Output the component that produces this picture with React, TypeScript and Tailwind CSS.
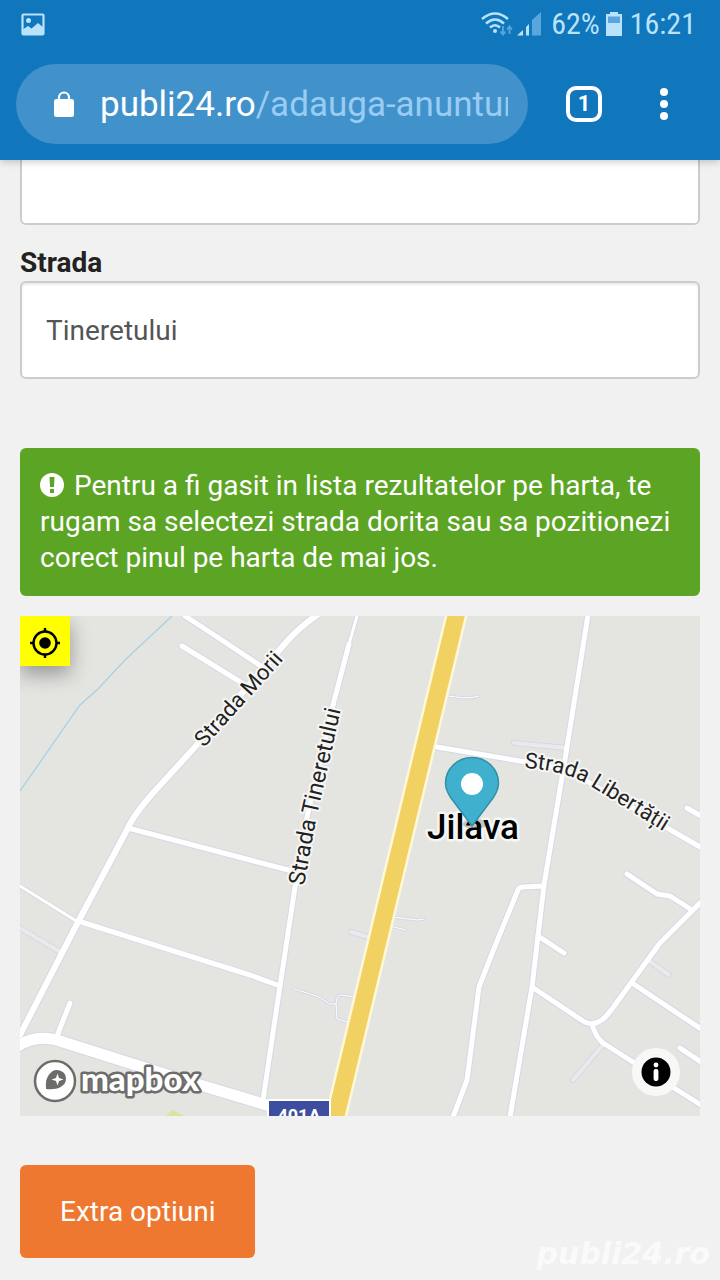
import { useState } from 'react';

type Line = { d: string; w: number; soft?: boolean };

// Street geometry, in map units (680 x 500)
const streets: Line[] = [
  { d: 'M494 127L547 132', w: 4, soft: true },
  { d: 'M0 312L40 336', w: 4, soft: true },
  { d: 'M628 344L649 359', w: 4, soft: true },
  { d: 'M583 429L553 464', w: 4, soft: true },
  { d: 'M331 316L348 321', w: 4, soft: true },
  { d: 'M420 79L436 81Q450 83 459 80', w: 1 },
  { d: 'M373 301L397 304L404 303', w: 1 },
  { d: 'M370 310L386 314', w: 1 },
  { d: 'M274 373L297 380L310 388H316L317 382Q318 379 321 379L334 381M316 388L317 403L328 406', w: 1 },
  { d: 'M0 270L58 306', w: 3 },
  { d: 'M337 0L328 32', w: 3 },
  { d: 'M165 0L182 11L244 52', w: 5 },
  { d: 'M162 30L222 67', w: 5 },
  { d: 'M297 -1Q278 12 262 31L175 131L133 177Q113 200 108 212L58 306L0 419', w: 6 },
  { d: 'M108 212L230 244L276 256', w: 5 },
  { d: 'M58 305L230 359L260 370', w: 5 },
  { d: 'M329 28L313 89L285 210L275 271L260 370L243 484', w: 5 },
  { d: 'M417 131L500 145Q545 150 575 170L680 231', w: 5 },
  { d: 'M667 192L681 200', w: 5 },
  { d: 'M568 -1L547 131L524 269L512 371L490 501', w: 5 },
  { d: 'M524 270L503 271Q499 271 498 274L475 330L459 371L450 441L447 464L433 501', w: 5 },
  { d: 'M518 320L544 337', w: 5 },
  { d: 'M512 371L563 405Q572 411 582 404Q587 400 592 393L640 327L681 286', w: 5 },
  { d: 'M572 408Q575 420 583 427L681 489', w: 5 },
  { d: 'M607 258L637 278L650 280L672 294', w: 5 },
  { d: 'M612 367L681 413', w: 5 },
  { d: 'M660 432L681 446', w: 5 },
  { d: 'M50 387L37 420', w: 5 },
  { d: 'M-2 430Q18 417 43 426L160 463L250 490', w: 11 },
];

const halo = {
  stroke: '#f6f6f4',
  strokeLinejoin: 'round' as const,
  paintOrder: 'stroke',
};

function StreetMap() {
  return (
    <svg
      viewBox="0 0 680 500"
      preserveAspectRatio="xMidYMid slice"
      className="block h-[500px] w-full font-[Roboto,sans-serif]"
      role="img"
      aria-label="Harta Jilava"
    >
      <defs>
        <path id="morii" d="M184 132L267 40" />
        <path id="tineretului" d="M284 270L296 204L324 80" />
        <path id="libertatii" d="M504 152Q542 154 567 168L608 193L662 227" />
      </defs>
      <rect width="680" height="500" fill="#e4e4e1" />
      <path d="M146 500L152 494L165 500Z" fill="#dce2a4" />
      <path d="M152 0L105 44L78 73L60 89L0 175" fill="none" stroke="#a9d0e5" strokeWidth="1.3" />

      <g fill="none" strokeLinecap="round" strokeLinejoin="round">
        {streets.map((s) => (
          <path key={s.d} d={s.d} stroke="#d6d8e4" strokeWidth={s.w + 2} />
        ))}
        {streets.map((s) => (
          <path key={s.d} d={s.d} stroke={s.soft ? '#eaeaec' : '#fff'} strokeWidth={s.w} />
        ))}
      </g>

      <g fill="none">
        <path d="M437 -4L375 254L315 504" stroke="#fff8d8" strokeWidth="22" />
        <path d="M437 -4L375 254L315 504" stroke="#f0d162" strokeWidth="17" />
      </g>

      <g fill="#222" fontSize="22" strokeWidth="4" {...halo}>
        <text>
          <textPath href="#morii">Strada Morii</textPath>
        </text>
        <text fontSize="23">
          <textPath href="#tineretului">Strada Tineretului</textPath>
        </text>
        <text>
          <textPath href="#libertatii">Strada Libertății</textPath>
        </text>
      </g>
      <text x="453" y="223" textAnchor="middle" fontSize="35" fontWeight="500" fill="#000" strokeWidth="5" {...halo}>
        Jilava
      </text>

      <rect x="248" y="484" width="62" height="30" fill="#3d4ea1" stroke="#fff" strokeWidth="2" />
      <text x="279" y="506" textAnchor="middle" fontSize="18" fontWeight="700" fill="#fff">
        401A
      </text>

      <ellipse cx="455" cy="208" rx="12" ry="5" fill="#000" opacity="0.2" />
      <path
        d="M452 210L431 182Q425.500 174 425.500 167A26.500 25.500 0 0 1 478.500 167Q478.500 174 473 182Z"
        fill="#3fb1ce"
        stroke="#338fa7"
        strokeWidth="1.500"
      />
      <circle cx="452" cy="168" r="11" fill="#fff" />
    </svg>
  );
}

function MapboxLogo() {
  return (
    <svg viewBox="0 0 176 46" className="block h-[46px] w-[176px]" aria-hidden="true">
      <circle cx="22" cy="23" r="20" fill="#fff" stroke="#6c6c6a" strokeWidth="2.500" />
      <path d="M13 31Q12 20 17 15.500A8.800 8.800 0 1 1 29 28Q24 32 13 31Z" fill="#6c6c6a" />
      <path d="M24.500 15.500L26 20L30.500 21.500L26 23L24.500 27.500L23 23L18.500 21.500L23 20Z" fill="#fff" />
      <text
        x="48"
        y="33"
        fontSize="33"
        fontWeight="900"
        fill="#fff"
        stroke="#6c6c6a"
        strokeWidth="5"
        strokeLinejoin="round"
        paintOrder="stroke"
        className="font-[Lato,sans-serif]"
      >
        mapbox
      </text>
    </svg>
  );
}

function StatusBar() {
  return (
    <div className="flex h-12 items-center px-5 text-[#b9e2fb]">
      <svg viewBox="0 0 26 24" className="h-6 w-[26px]" aria-hidden="true">
        <rect x="2.500" y="2.500" width="21" height="20" rx="1" fill="none" stroke="currentColor" strokeWidth="2.200" />
        <circle cx="8.500" cy="8.500" r="2.500" fill="currentColor" />
        <path d="M2 18L8 14L11.500 16.500L18 11L24 16V23H2Z" fill="currentColor" />
      </svg>
      <div className="ml-auto flex items-center pr-1">
        <svg viewBox="0 0 62 26" className="mr-2 h-[26px] w-[62px]" aria-hidden="true">
          <g fill="none" stroke="currentColor" strokeWidth="2.500">
            <path d="M1 8Q14 -3 27 8" />
            <path d="M5 12.500Q14 4.500 23 12.500" />
            <path d="M9 16.500Q14 12 19 16.500" />
          </g>
          <circle cx="14" cy="20" r="2" fill="currentColor" />
          <g fill="none" stroke="#5aa6dc" strokeWidth="1.800">
            <path d="M22 15V23M19.500 20.500L22 23.500L24.500 20.500" />
            <path d="M28.500 23V16M26 18.500L28.500 15.500L31 18.500" />
          </g>
          <path d="M36 24.500L42 19V24.500Z" fill="currentColor" />
          <path d="M45 24.500V16L48 13V24.500Z" fill="currentColor" />
          <path d="M51 24.500V9L60 1V24.500Z" fill="#5aa6dc" />
        </svg>
        <span className="text-[30px] leading-9 font-[Roboto_Condensed,Roboto,sans-serif]">62%</span>
        <svg viewBox="0 0 16 24" className="mr-2 ml-1.5 h-6 w-4" aria-hidden="true">
          <path d="M4 0H12V2H16V24H0V2H4Z" fill="currentColor" />
          <path d="M2 4.500H14V11H2Z" fill="#5aa6dc" />
        </svg>
        <span className="text-[30px] leading-9 font-[Roboto_Condensed,Roboto,sans-serif]">16:21</span>
      </div>
    </div>
  );
}

export default function App() {
  const [street, setStreet] = useState('Tineretului');
  const [area, setArea] = useState('');

  return (
    <div className="relative min-h-screen bg-[#f1f1f1] font-[Roboto,sans-serif] text-[28px] leading-9 text-[#222]">
      <header className="relative z-10 bg-[#1077bc] pb-4 shadow-[0_1px_8px_rgba(0,0,0,0.25)]">
        <StatusBar />
        <div className="mt-4 flex items-center pr-9 pl-4">
          <div className="flex h-20 min-w-0 flex-1 items-center rounded-full bg-[#4192ca] pr-5 pl-[38px]">
            <svg viewBox="0 0 20 26" className="mr-[26px] h-[26px] w-5 shrink-0" aria-hidden="true">
              <path d="M5 10V6.500A5 5 0 0 1 15 6.500V10" fill="none" stroke="#fff" strokeWidth="2.200" />
              <rect y="8" width="20" height="18" rx="2.500" fill="#fff" />
            </svg>
            <div className="min-w-0 flex-1 overflow-hidden pt-0.5 text-[35px] leading-11 whitespace-nowrap text-white">
              publi24.ro<span className="text-[#98ccf3]">/adauga-anunturi</span>
            </div>
          </div>
          <button
            aria-label="File deschise"
            className="ml-[38px] flex size-9 items-center justify-center rounded-[10px] border-4 border-white text-[22px] font-bold text-white"
          >
            1
          </button>
          <button aria-label="Meniu" className="ml-[42px] flex w-10 flex-col items-center gap-1 py-2">
            <span className="size-2 rounded-full bg-white" />
            <span className="size-2 rounded-full bg-white" />
            <span className="size-2 rounded-full bg-white" />
          </button>
        </div>
      </header>

      <main className="px-5">
        <input
          type="text"
          aria-label="Zona"
          value={area}
          onChange={(e) => setArea(e.target.value)}
          className="-mt-[33px] block h-[98px] w-full rounded-md border-2 border-[#ccc] bg-white px-6 text-[#555] outline-none"
        />

        <label htmlFor="street" className="mt-5 block font-bold">
          Strada
        </label>
        <input
          id="street"
          type="text"
          value={street}
          onChange={(e) => setStreet(e.target.value)}
          className="block h-[98px] w-full rounded-md border-2 border-[#ccc] bg-white px-6 text-[#555] shadow-[inset_0_2px_2px_rgba(0,0,0,0.08)] outline-none"
        />

        <p className="mt-[69px] rounded-md bg-[#5ca424] p-5 text-white">
          <svg viewBox="0 0 24 24" className="mr-2.5 inline-block size-6 align-[-2px]" aria-hidden="true">
            <circle cx="12" cy="12" r="12" fill="#fff" />
            <path d="M9.500 4H14.500L14 14H10Z" fill="#5ca424" />
            <rect x="10" y="16" width="4" height="4" fill="#5ca424" />
          </svg>
          Pentru a fi gasit in lista rezultatelor pe harta, te rugam sa selectezi strada dorita sau sa pozitionezi
          corect pinul pe harta de mai jos.
        </p>

        <section className="relative mt-5 overflow-hidden">
          <StreetMap />
          <button
            aria-label="Localizeaza-ma"
            className="absolute top-0 left-0 flex size-[50px] items-center justify-center bg-[#ff0] pt-1 text-black shadow-[0_8px_20px_rgba(0,0,0,0.35)]"
          >
            <svg viewBox="0 0 30 30" className="size-[30px]" aria-hidden="true">
              <g fill="none" stroke="currentColor" strokeWidth="2.400">
                <circle cx="15" cy="15" r="11.500" />
                <path d="M15 0V4M15 26V30M0 15H4M26 15H30" />
              </g>
              <circle cx="15" cy="15" r="5.800" fill="currentColor" />
            </svg>
          </button>
          <a href="#mapbox" aria-label="Mapbox" className="absolute bottom-3 left-[13px]">
            <MapboxLogo />
          </a>
          <button
            aria-label="Informatii harta"
            className="absolute right-5 bottom-5 flex size-12 items-center justify-center rounded-full bg-[#f8f8f7]"
          >
            <svg viewBox="0 0 30 30" className="size-[30px]" aria-hidden="true">
              <circle cx="15" cy="15" r="14.500" fill="#000" />
              <circle cx="15" cy="8" r="2.400" fill="#fff" />
              <rect x="12.600" y="12" width="4.800" height="12" rx="2" fill="#fff" />
            </svg>
          </button>
        </section>

        <button className="mt-[49px] mb-5 block rounded-md bg-[#ef7830] px-10 py-7 leading-[37px] text-white">
          Extra optiuni
        </button>
      </main>

      <span className="pointer-events-none absolute right-2.5 bottom-2 font-['DejaVu_Sans',sans-serif] text-[30px] font-bold text-white/70 italic">
        publi24.ro
      </span>
    </div>
  );
}
